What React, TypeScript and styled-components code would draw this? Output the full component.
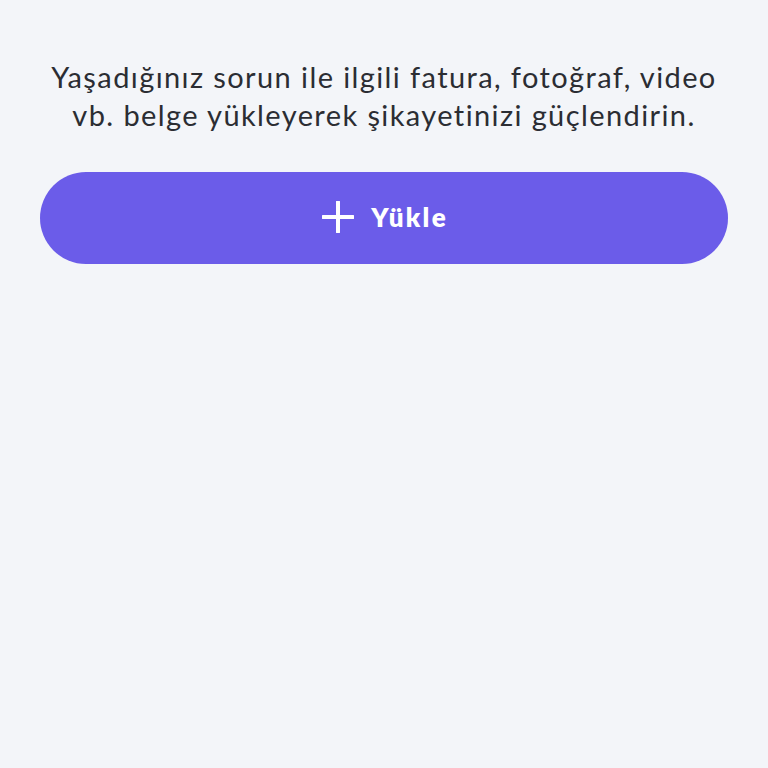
import React from 'react'
import styled, { createGlobalStyle } from 'styled-components'

const GlobalStyle = createGlobalStyle`
  html, body {
    margin: 0;
    padding: 0;
    background: #f3f5f9;
  }
  body {
    font-family: Lato, "Noto Sans", sans-serif;
  }
`

const Page = styled.div`
  min-height: 768px;
  padding: 58px 40px 0;
  box-sizing: border-box;
  display: flex;
  flex-direction: column;
  align-items: stretch;
`

const Hint = styled.p`
  margin: 0;
  text-align: center;
  color: #2b2d33;
  font-size: 29px;
  line-height: 38px;
  letter-spacing: 1.4px;
`

const UploadButton = styled.button`
  margin-top: 38px;
  height: 92px;
  border: none;
  border-radius: 46px;
  background: #6b5ce9;
  color: #fff;
  display: flex;
  align-items: center;
  justify-content: center;
  gap: 17px;
  padding: 0 0 3px;
  font-family: Lato, "Noto Sans", sans-serif;
  font-weight: 800;
  font-size: 26px;
  letter-spacing: 2.3px;
  cursor: pointer;
`

const Label = styled.span`
  margin-right: -2.3px;
`

const PlusIcon = () => (
  <svg width="32" height="32" viewBox="0 0 32 32" fill="none">
    <path d="M16 1v30M1 16h30" stroke="#fff" strokeWidth="4" strokeLinecap="round" />
  </svg>
)

const App: React.FC = () => {
  return (
    <>
      <GlobalStyle />
      <Page>
        <Hint>
          Yaşadığınız sorun ile ilgili fatura, fotoğraf, video
          <br />
          vb. belge yükleyerek şikayetinizi güçlendirin.
        </Hint>
        <UploadButton type="button">
          <PlusIcon />
          <Label>Yükle</Label>
        </UploadButton>
      </Page>
    </>
  )
}

export default App
